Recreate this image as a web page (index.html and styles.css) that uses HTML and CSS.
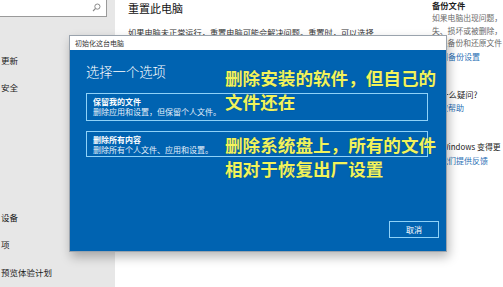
FILE: index.html
```html
<!DOCTYPE html>
<html lang="zh-CN">
<head>
<meta charset="utf-8">
<title>重置此电脑</title>
<link rel="stylesheet" href="styles.css">
</head>
<body>
<div class="app">
  <aside class="sidebar">
    <div class="search">
      <svg class="search-icon" width="9" height="9" viewBox="0 0 9 9"><circle cx="5.4" cy="3.6" r="2.6" fill="none" stroke="#8a8a8a" stroke-width="1"/><line x1="3.5" y1="5.5" x2="1" y2="8" stroke="#8a8a8a" stroke-width="1.1"/></svg>
    </div>
    <nav class="nav">
      <div class="nav-item">更新</div>
      <div class="nav-item">安全</div>
      <div class="nav-spacer"></div>
      <div class="nav-item">设备</div>
      <div class="nav-item">项</div>
      <div class="nav-item">预览体验计划</div>
    </nav>
  </aside>
  <main class="main">
    <section class="content">
      <h1 class="title">重置此电脑</h1>
      <p class="desc">如果电脑未正常运行，重置电脑可能会解决问题。重置时，可以选择保留个人文件或删除个人文件，然后重新安装 Windows。</p>
    </section>
    <section class="aside">
      <h2 class="aside-head">备份文件</h2>
      <p class="aside-text"><span class="line">如果电脑出现问题，</span><span class="line">失、损坏或被删除，</span><span class="line">可以备份和还原文件</span></p>
      <a class="aside-link">转到备份设置</a>
      <h2 class="aside-head gap-lg">有什么疑问?</h2>
      <a class="aside-link">获取帮助</a>
      <h2 class="aside-head gap-xl">让 Windows 变得更</h2>
      <a class="aside-link gap-sm">向我们提供反馈</a>
    </section>
  </main>
</div>

<div class="dialog">
  <div class="dialog-titlebar">初始化这台电脑</div>
  <div class="dialog-body">
    <h2 class="dialog-heading">选择一个选项</h2>
    <div class="option option-first">
      <div class="option-title">保留我的文件</div>
      <div class="option-desc">删除应用和设置，但保留个人文件。</div>
    </div>
    <div class="option option-second">
      <div class="option-title">删除所有内容</div>
      <div class="option-desc">删除所有个人文件、应用和设置。</div>
    </div>
    <button class="cancel">取消</button>
  </div>
</div>

<div class="note">
  <p class="note-block">删除安装的软件，但自己的<br>文件还在</p>
  <p class="note-block note-second">删除系统盘上，所有的文件<br>相对于恢复出厂设置</p>
</div>
</body>
</html>
```

FILE: styles.css
```css
* { box-sizing: border-box; }

html, body {
  margin: 0;
  padding: 0;
  width: 503px;
  height: 287px;
  overflow: hidden;
  background: #ffffff;
  font-family: "Noto Sans CJK SC", "Noto Sans", "Liberation Sans", sans-serif;
  color: #1a1a1a;
}

.app {
  display: flex;
  width: 503px;
  height: 287px;
}

/* ---------- sidebar ---------- */
.sidebar {
  width: 115px;
  flex: none;
  background: #e7e7e7;
  display: flex;
  flex-direction: column;
}

.search {
  margin-top: -2px;
  width: 107px;
  height: 19px;
  background: #ffffff;
  border: 1px solid #9a9a9a;
  border-left: none;
  display: flex;
  align-items: center;
  justify-content: flex-end;
  padding-right: 5px;
}

.search-icon { display: block; }

.nav {
  margin-top: 29.5px;
  display: flex;
  flex-direction: column;
}

.nav-item {
  font-size: 8.5px;
  line-height: 27.3px;
  height: 27.3px;
  padding-left: 1px;
  color: #1a1a1a;
  white-space: nowrap;
}

.nav-spacer { height: 103px; }

/* ---------- main ---------- */
.main {
  flex: 1;
  display: flex;
  padding-left: 13px;
  background: #ffffff;
  min-width: 0;
}

.content {
  width: 250px;
  flex: none;
}

.title {
  margin: 0;
  font-size: 11px;
  line-height: 16px;
  font-weight: 400;
  color: #111111;
}

.desc {
  margin: 9.7px 0 0;
  font-size: 8.2px;
  line-height: 12px;
  color: #333333;
}

.aside {
  margin-left: 54px;
  width: 71px;
  flex: none;
  display: flex;
  flex-direction: column;
  align-items: flex-start;
}

.aside-head {
  margin: -0.5px 0 0;
  font-size: 8.3px;
  line-height: 11px;
  font-weight: 700;
  color: #1f1f1f;
  white-space: nowrap;
}

.aside-head.gap-lg { margin-top: 26.2px; font-weight: 400; color: #222; }
.aside-head.gap-xl { margin-top: 27.2px; font-weight: 400; color: #222; font-size: 7.9px; }

.aside-text {
  margin: 1.5px 0 0;
  font-size: 7.8px;
  line-height: 12.5px;
  color: #6a6a6a;
}

.line { display: block; white-space: nowrap; }

.aside-link {
  margin-top: 1.2px;
  font-size: 8px;
  line-height: 12.5px;
  color: #2a6fb5;
  white-space: nowrap;
}

.aside-link.gap-sm { margin-top: 3.2px; }

/* ---------- dialog overlay ---------- */
.dialog {
  position: absolute;
  left: 69px;
  top: 35px;
  width: 378px;
  height: 217px;
  display: flex;
  flex-direction: column;
  border: 1px solid #9aa3ad;
  box-shadow: 2px 5px 10px rgba(0, 0, 0, 0.28);
}

.dialog-titlebar {
  height: 14px;
  flex: none;
  background: #ffffff;
  font-size: 7px;
  line-height: 14px;
  padding-left: 5px;
  color: #333333;
}

.dialog-body {
  flex: 1;
  background: #0063b1;
  display: flex;
  flex-direction: column;
  padding: 13px 7px 13px 16px;
}

.dialog-heading {
  margin: 0;
  font-size: 13.3px;
  line-height: 18px;
  font-weight: 300;
  color: #ffffff;
}

.option {
  margin-right: 11px;
  border: 1.6px solid #8fd2f8;
  padding: 2px 0 0 6px;
  color: #ffffff;
}

.option-first { margin-top: 12px; height: 27.5px; }
.option-second { margin-top: 10px; height: 26px; }

.option-title {
  font-size: 8px;
  line-height: 11px;
  font-weight: 700;
}

.option-desc {
  font-size: 8px;
  line-height: 10px;
  color: #e6f1fb;
}

.cancel {
  margin-top: auto;
  align-self: flex-end;
  width: 50px;
  height: 17px;
  padding: 0;
  background: #0063b1;
  border: 1.6px solid #8fd2f8;
  color: #ffffff;
  font-family: "Noto Sans CJK SC", sans-serif;
  font-size: 8px;
  line-height: 13px;
}

/* ---------- yellow annotation overlay ---------- */
.note {
  position: absolute;
  left: 225px;
  top: 66px;
}

.note-block {
  margin: 0;
  font-size: 17.6px;
  line-height: 24px;
  font-weight: 700;
  color: #f1f35c;
  white-space: nowrap;
  text-shadow: 0 0 1px rgba(0, 40, 80, 0.6);
}

.note-second { margin-top: 19px; }
```
